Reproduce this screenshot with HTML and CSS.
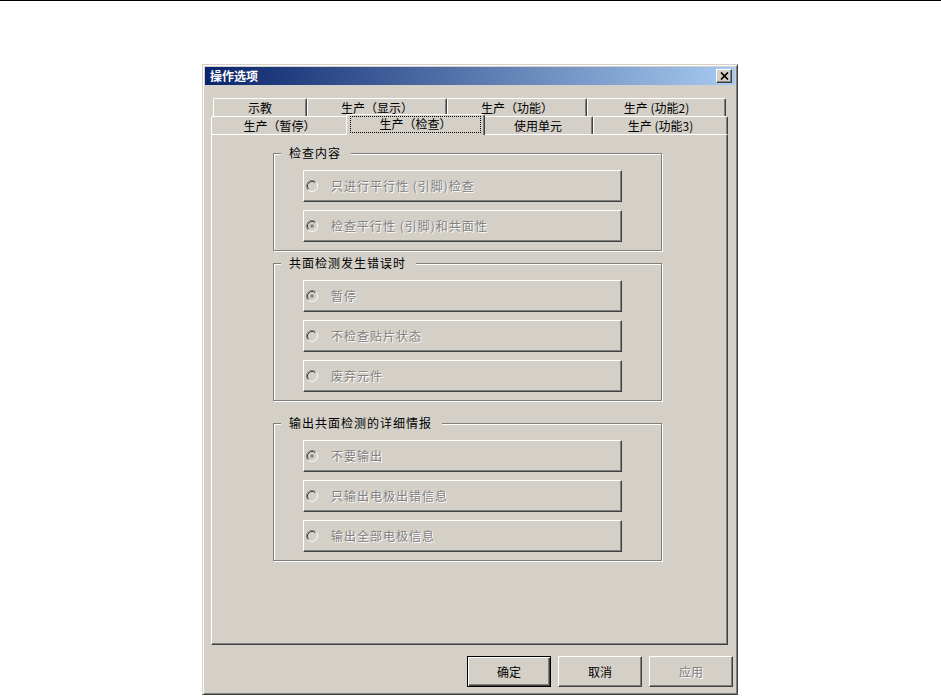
FILE: index.html
```html
<!DOCTYPE html>
<html lang="zh-CN">

<head>
    <meta charset="UTF-8">
    <title>操作选项</title>
    <link rel="stylesheet" href="styles.css">
</head>

<body>

    <svg class="defs" width="0" height="0">
        <symbol id="radio-off" viewBox="0 0 12 12">
            <circle cx="6" cy="6" r="4.5" fill="#d4d0c8"/>
            <path d="M2.11 9.89 A5.5 5.5 0 0 1 9.89 2.11" fill="none" stroke="#808080"/>
            <path d="M9.89 2.11 A5.5 5.5 0 0 1 2.11 9.89" fill="none" stroke="#ffffff"/>
            <path d="M2.82 9.18 A4.5 4.5 0 0 1 9.18 2.82" fill="none" stroke="#404040"/>
            <path d="M9.18 2.82 A4.5 4.5 0 0 1 2.82 9.18" fill="none" stroke="#d4d0c8"/>
        </symbol>
        <symbol id="radio-on" viewBox="0 0 12 12">
            <use href="#radio-off"/>
            <circle cx="6" cy="6" r="1.8" fill="#808080"/>
        </symbol>
    </svg>

    <div class="topline"></div>

    <div class="dialog">
        <div class="titlebar">
            <span class="title">操作选项</span>
            <span class="close">
                <svg width="9" height="8" viewBox="0 0 9 8">
                    <path d="M1 0.5 L8 7.5 M8 0.5 L1 7.5" stroke="#000" stroke-width="1.7"/>
                </svg>
            </span>
        </div>

        <div class="client">
            <div class="tabs">
                <div class="tabrow back">
                    <div class="tab t-teach">示教</div>
                    <div class="tab t-wide">生产（显示）</div>
                    <div class="tab t-wide">生产（功能）</div>
                    <div class="tab t-func2">生产 (功能2)</div>
                </div>
                <div class="tabrow front">
                    <div class="tab t-pause">生产（暂停）</div>
                    <div class="tab t-check active"><span class="focus">生产（检查）</span></div>
                    <div class="tab t-unit">使用单元</div>
                    <div class="tab t-func3">生产 (功能3)</div>
                </div>
            </div>

            <div class="panel">
                <fieldset class="group">
                    <legend>检查内容</legend>
                    <div class="opt"><svg class="radio"><use href="#radio-off"/></svg>只进行平行性 (引脚)检查</div>
                    <div class="opt"><svg class="radio"><use href="#radio-on"/></svg>检查平行性 (引脚)和共面性</div>
                </fieldset>

                <fieldset class="group g2">
                    <legend>共面检测发生错误时</legend>
                    <div class="opt"><svg class="radio"><use href="#radio-on"/></svg>暂停</div>
                    <div class="opt"><svg class="radio"><use href="#radio-off"/></svg>不检查贴片状态</div>
                    <div class="opt"><svg class="radio"><use href="#radio-off"/></svg>废弃元件</div>
                </fieldset>

                <fieldset class="group g3">
                    <legend>输出共面检测的详细情报</legend>
                    <div class="opt"><svg class="radio"><use href="#radio-on"/></svg>不要输出</div>
                    <div class="opt"><svg class="radio"><use href="#radio-off"/></svg>只输出电极出错信息</div>
                    <div class="opt"><svg class="radio"><use href="#radio-off"/></svg>输出全部电极信息</div>
                </fieldset>
            </div>

            <div class="buttons">
                <div class="btn default">确定</div>
                <div class="btn">取消</div>
                <div class="btn disabled">应用</div>
            </div>
        </div>
    </div>

</body>

</html>
```

FILE: styles.css
```css
* {
    box-sizing: border-box;
}

body {
    margin: 0;
    background-color: #fff;
    font-family: "Noto Sans CJK SC", "Liberation Sans", sans-serif;
    font-size: 12px;
    line-height: 14px;
    color: #000;
}

.defs {
    position: absolute;
}

.topline {
    height: 1px;
    background-color: #000;
}

/* window frame */
.dialog {
    width: 536px;
    margin: 63px 0 0 202px;
    padding: 2px;
    background-color: #d4d0c8;
    border: 1px solid;
    border-color: #d4d0c8 #404040 #404040 #d4d0c8;
    box-shadow: inset 1px 1px #fff, inset -1px -1px #808080;
}

.titlebar {
    height: 18px;
    display: flex;
    align-items: center;
    justify-content: space-between;
    padding: 0 3px 0 5px;
    background: linear-gradient(to right, #0a246a, #a6caf0);
    color: #fff;
    font-weight: bold;
}

.close {
    width: 16px;
    height: 14px;
    display: flex;
    align-items: center;
    justify-content: center;
    background-color: #d4d0c8;
    border: 1px solid;
    border-color: #fff #404040 #404040 #fff;
    box-shadow: inset -1px -1px #808080;
}

.client {
    padding: 13px 7px 5px 6px;
}

/* tabs */
.tabrow {
    display: flex;
    height: 18px;
}

.back {
    padding-left: 2px;
}

.tab {
    display: flex;
    align-items: center;
    justify-content: center;
    background-color: #d4d0c8;
    border-top: 1px solid #fff;
    border-left: 1px solid #fff;
    border-right: 1px solid #404040;
    border-radius: 2px 2px 0 0;
    box-shadow: inset -1px 0 #808080;
    white-space: nowrap;
}

.t-teach { width: 94px; }
.t-wide { width: 140px; }
.t-func2 { width: 139px; }
.t-pause { width: 137px; }
.t-check { width: 135px; }
.t-unit { width: 110px; }
.t-func3 { width: 135px; }

.tab.active {
    position: relative;
    z-index: 1;
    width: 139px;
    height: 21px;
    margin: -2px -2px 0;
    align-items: flex-start;
    padding: 1px 3px 0;
}

.focus {
    width: 100%;
    height: 17px;
    text-align: center;
    border: 1px dotted #000;
}

/* page */
.panel {
    height: 511px;
    padding: 10px 0 0 61px;
    border: 1px solid;
    border-color: #fff #404040 #404040 #fff;
    box-shadow: inset -1px -1px #808080;
}

.group {
    width: 389px;
    margin: 0;
    padding: 9px 0 8px 29px;
    border: 1px solid #808080;
    box-shadow: inset 1px 1px #fff, 1px 1px #fff;
}

.group legend {
    margin-left: -22px;
    padding: 0 10px 0 8px;
    line-height: 16px;
    letter-spacing: 1px;
    background-color: #d4d0c8;
}

.g2 {
    margin-top: 4px;
}

.g3 {
    margin-top: 14px;
}

.opt {
    width: 319px;
    height: 32px;
    display: flex;
    align-items: center;
    padding-left: 2px;
    color: #808080;
    letter-spacing: 1px;
    text-shadow: 1px 1px #fff;
    border: 1px solid;
    border-color: #fff #404040 #404040 #fff;
    box-shadow: inset -1px -1px #808080;
}

.opt + .opt {
    margin-top: 8px;
}

.radio {
    width: 12px;
    height: 12px;
    margin-right: 13px;
    flex-shrink: 0;
}

/* dialog buttons */
.buttons {
    display: flex;
    justify-content: flex-end;
    gap: 7px;
    margin: 11px -5px 0 0;
}

.btn {
    width: 84px;
    height: 31px;
    display: flex;
    align-items: center;
    justify-content: center;
    border: 1px solid;
    border-color: #fff #404040 #404040 #fff;
    box-shadow: inset -1px -1px #808080;
}

.btn.default {
    border-color: #000;
    box-shadow: inset 1px 1px #fff, inset -1px -1px #404040, inset -2px -2px #808080;
}

.btn.disabled {
    color: #808080;
    text-shadow: 1px 1px #fff;
}
```
